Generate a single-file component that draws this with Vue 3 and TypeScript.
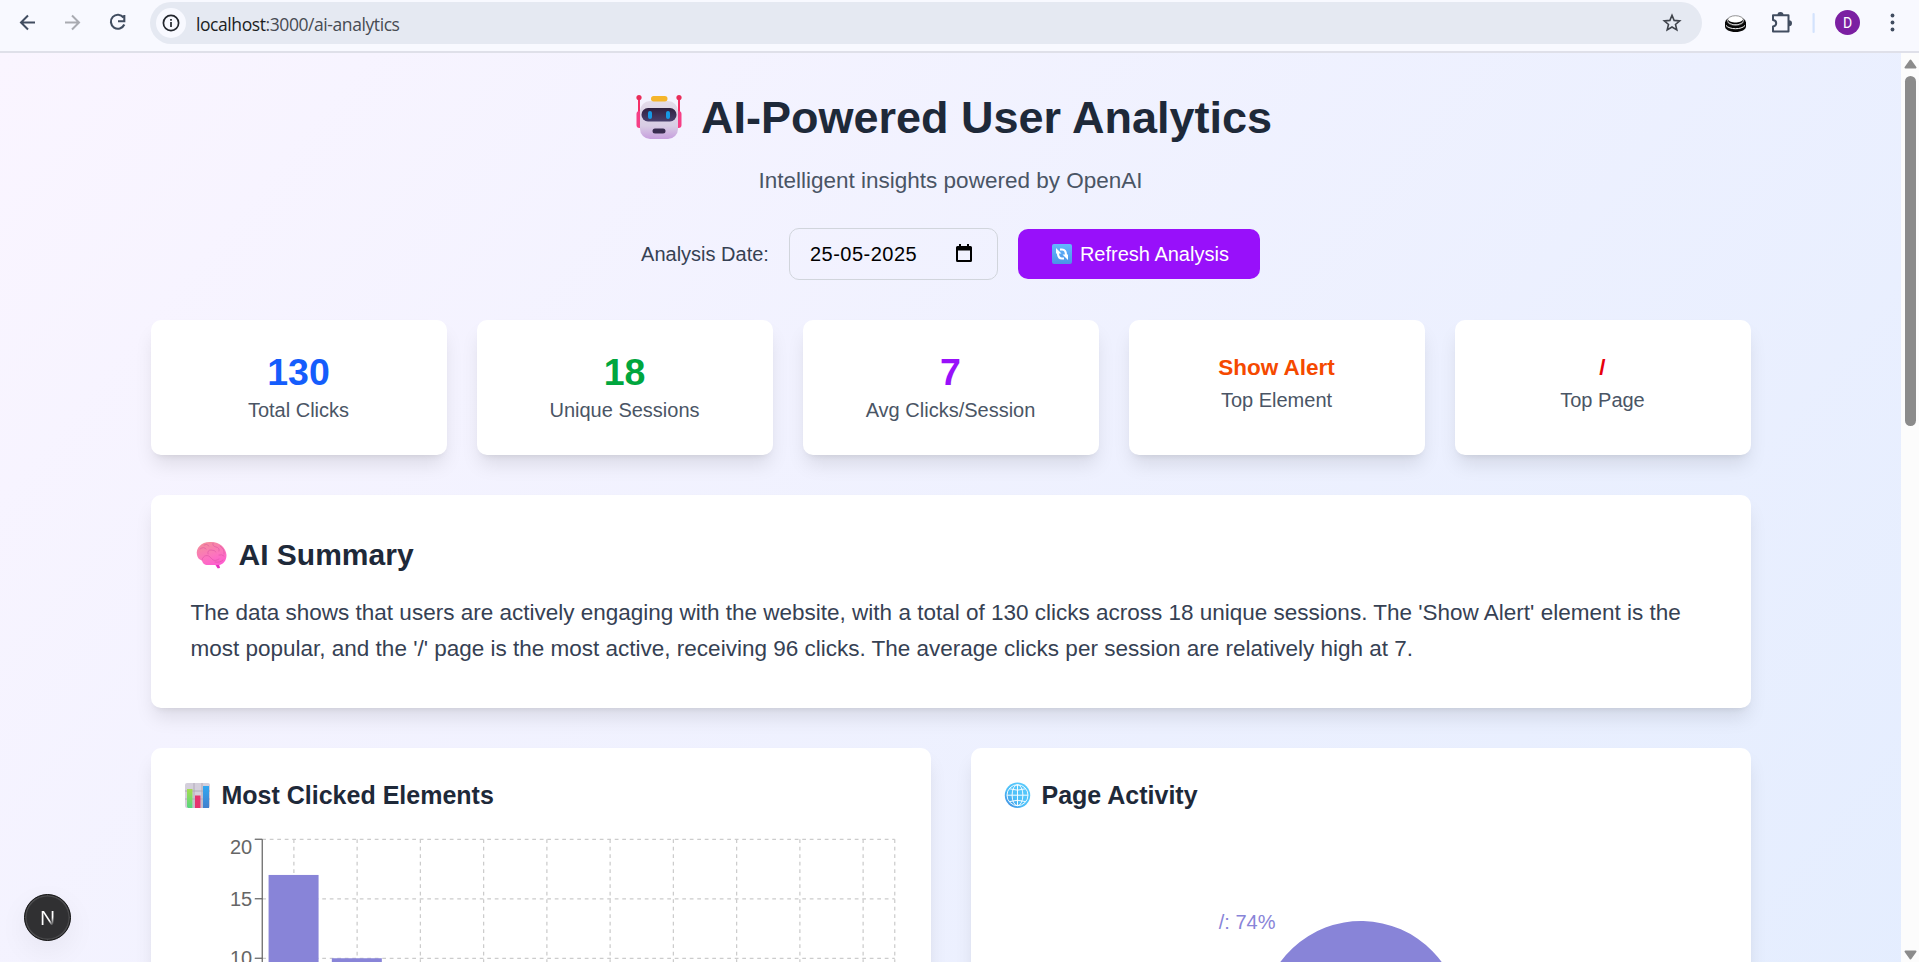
<script setup lang="ts">
interface Stat {
  value: string
  label: string
  tone: string
  small?: boolean
}

const stats: Stat[] = [
  { value: '130', label: 'Total Clicks', tone: 'blue' },
  { value: '18', label: 'Unique Sessions', tone: 'green' },
  { value: '7', label: 'Avg Clicks/Session', tone: 'purple' },
  { value: 'Show Alert', label: 'Top Element', tone: 'orange', small: true },
  { value: '/', label: 'Top Page', tone: 'red', small: true },
]

const plot = { left: 81.25, right: 713.75, top: 6.25, bottom: 244.25 }
const maxValue = 20
const band = (plot.right - plot.left) / 10
const toY = (v: number): number => plot.top + ((maxValue - v) / maxValue) * (plot.bottom - plot.top)

const columns: number[] = Array.from({ length: 10 }, (_, i) => plot.left + band * (i + 0.5))
const ticks = [
  { value: 20, labelY: 21 },
  { value: 15, labelY: 73 },
  { value: 10, labelY: 131.5 },
]
const bars = [17, 10].map((value, i) => ({
  x: plot.left + band * i + band * 0.1,
  y: toY(value),
  height: plot.bottom - toY(value),
}))
</script>

<template>
  <div class="window">
    <header class="toolbar">
      <svg class="nav" width="140" height="51" viewBox="0 0 140 51" fill="none" stroke-width="2">
        <path d="M35 22.5H21.5M28 15.5l-7 7 7 7" stroke="#414d60" />
        <path d="M65 22.5h13.5M72 15.5l7 7-7 7" stroke="#a9abb1" />
        <path d="M123.5 17.5A7 7 0 1 0 124.300 24.500M124.300 15v6.300h-6.300" stroke="#414d60" stroke-width="2.1" />
      </svg>
      <div class="address">
        <span class="info">
          <svg width="18" height="18" viewBox="0 0 18 18" fill="none" stroke="#22262d">
            <circle cx="9" cy="9" r="7.600" stroke-width="1.700" />
            <path d="M9 8v5M9 5v1.700" stroke-width="1.700" />
          </svg>
        </span>
        <span class="url"><b>localhost</b>:3000/ai-analytics</span>
        <svg class="star" width="20" height="20" viewBox="0 0 20 20" fill="none" stroke="#3f434b" stroke-width="1.600">
          <path d="M10 2.300l2.100 5.100 5.600.5-4.200 3.600 1.300 5.400L10 14l-4.800 2.900 1.300-5.400-4.200-3.600 5.600-.5z" />
        </svg>
      </div>
      <svg class="extensions" width="217" height="51" viewBox="1702 0 217 51">
        <path d="M1725 22v4.500c0 3 4.500 5.500 10.500 5.500s10.500-2.500 10.500-5.500V22z" fill="#080808" />
        <ellipse cx="1735.500" cy="22" rx="10.300" ry="5.300" fill="#080808" />
        <path d="M1726 25.500c3.500 4.300 15.500 4.300 19 0" fill="none" stroke="#fff" stroke-width="1" />
        <ellipse cx="1735.500" cy="20.600" rx="8.300" ry="4.900" fill="#fff" stroke="#666" stroke-width=".7" />
        <path d="M1728 19.500v1c0 2 3 3.800 7.500 3.800s7.500-1.800 7.500-3.800v-1c-1.500 4-13.500 4-15 0z" fill="#080808" />
        <path d="M1773 15.200h15.500v16.300h-15.500v-5q3.200-.5 3.200-3.200t-3.200-3.200z" fill="none" stroke="#414d60" stroke-width="2" stroke-linejoin="round" />
        <path d="M1777.500 15a3 3 0 0 1 6 0zM1789 20.300a3 3 0 0 1 0 6z" fill="#414d60" />
        <rect x="1812.500" y="13" width="2.200" height="20" rx="1" fill="#d3e3fd" />
        <circle cx="1847.500" cy="22.500" r="12.500" fill="#7b1fa2" />
        <text x="1847.500" y="27.500" text-anchor="middle" class="avatar">D</text>
        <g fill="#414d60">
          <circle cx="1892.500" cy="15.500" r="1.900" />
          <circle cx="1892.500" cy="22.500" r="1.900" />
          <circle cx="1892.500" cy="29.500" r="1.900" />
        </g>
      </svg>
    </header>

    <div class="viewport">
      <main class="page">
        <div class="container">
          <h1>
            <svg width="58" height="50" viewBox="0 0 58 50">
              <defs>
                <linearGradient id="head" x2="0" y2="1">
                  <stop offset="0" stop-color="#e3dcea" />
                  <stop offset=".65" stop-color="#d8cde4" />
                  <stop offset="1" stop-color="#c79fde" />
                </linearGradient>
                <linearGradient id="visor" x2="0" y2="1">
                  <stop offset="0" stop-color="#30203f" />
                  <stop offset="1" stop-color="#49406d" />
                </linearGradient>
              </defs>
              <path d="M8 6v27M48 6v27" stroke="#f52f67" stroke-width="2" />
              <circle cx="8" cy="4.500" r="2.600" fill="#e92d59" />
              <circle cx="48" cy="4.500" r="2.600" fill="#e92d59" />
              <rect x="5.500" y="18" width="6" height="17" rx="3" fill="#f63f86" />
              <rect x="44.500" y="18" width="6" height="17" rx="3" fill="#f63f86" />
              <rect x="9" y="8" width="38" height="38" rx="10" fill="url(#head)" />
              <rect x="20" y="3" width="16.500" height="5.500" rx="2.700" fill="#f5b52b" />
              <rect x="10.500" y="15" width="35" height="13.500" rx="6.500" fill="url(#visor)" />
              <rect x="17" y="18" width="4" height="8" rx="2" fill="#1699e5" />
              <rect x="35" y="18" width="4" height="8" rx="2" fill="#1699e5" />
              <rect x="21.500" y="35.500" width="13" height="5" rx="2.500" fill="#392c50" />
            </svg>
            <span class="title">AI-Powered User Analytics</span>
          </h1>
          <p class="subtitle">Intelligent insights powered by OpenAI</p>

          <div class="controls">
            <span class="date-label">Analysis Date:</span>
            <div class="date-input">
              <span>25-05-2025</span>
              <svg width="18" height="20" viewBox="0 0 18 20">
                <path fill="#000" fill-rule="evenodd" d="M4 0h2v2h6V0h2v2h1.500q1.500 0 1.500 1.500v13q0 1.500-1.500 1.500h-13Q1 18 1 16.500v-13Q1 2 2.500 2H4zM3 6.500V16h12V6.500z" />
              </svg>
            </div>
            <button class="refresh" type="button">
              <svg width="32" height="22" viewBox="0 0 32 22">
                <defs>
                  <linearGradient id="sync" x2="0" y2="1">
                    <stop offset="0" stop-color="#64b7ff" />
                    <stop offset="1" stop-color="#4b93e6" />
                  </linearGradient>
                </defs>
                <rect x="4" y="1" width="20" height="20" rx="2" fill="url(#sync)" />
                <g fill="none" stroke="#fff" stroke-width="2.200">
                  <path d="M12 6.500h2q4 0 4 5.500M16 15.500h-2q-4 0-4-5.500" />
                </g>
                <path d="M8 5v5.500h5.500zM20 17v-5.500h-5.500z" fill="#fff" />
              </svg>
              <span>Refresh Analysis</span>
            </button>
          </div>

          <section class="stats">
            <div v-for="stat in stats" :key="stat.label" class="card stat">
              <div class="value" :class="[stat.tone, { small: stat.small }]">{{ stat.value }}</div>
              <div class="label">{{ stat.label }}</div>
            </div>
          </section>

          <section class="card summary">
            <h2>
              <svg width="48" height="40" viewBox="0 0 48 40">
                <defs>
                  <linearGradient id="brain" x1=".3" x2=".7" y2="1">
                    <stop offset="0" stop-color="#f38e9c" />
                    <stop offset=".5" stop-color="#fc75bd" />
                    <stop offset="1" stop-color="#ff56d5" />
                  </linearGradient>
                </defs>
                <path d="M6 20C4.500 13 10.500 7 18.500 7c9-1 16.500 5 17 13 0 6-3.500 9.500-7.500 10l.8 3-2.200.3-2.300-3.300H17c-4 0-5.500-2-6-4.500-2.500-.5-4.500-2.500-5-5.500z" fill="url(#brain)" />
                <g fill="none" stroke="#dc53a3" stroke-width="1" opacity=".6" stroke-linecap="round">
                  <path d="M9 14q4-3 6 0M13 10q3-2 5 1M11 25c1-5 6-6 9-2s6 2 8 1M17 19q-1-4 3-4t5 2M22 8q-1 3 3 4t3 4M29 11q5 3 4 8M24 27q5 1 8-2M28 20q3-1 5 1" />
                </g>
                <path d="m25 30 1.700 3.300 2.200-.3-.8-3z" fill="#e52fbe" />
              </svg>
              <span>AI Summary</span>
            </h2>
            <p>
              The data shows that users are actively engaging with the website, with a total of 130 clicks across 18
              unique sessions. The 'Show Alert' element is the most popular, and the '/' page is the most active,
              receiving 96 clicks. The average clicks per session are relatively high at 7.
            </p>
          </section>

          <section class="charts">
            <div class="card panel">
              <h3>
                <svg width="41" height="35" viewBox="0 0 41 35">
                  <defs>
                    <linearGradient id="barGreen" x2="0" y2="1">
                      <stop offset="0" stop-color="#a5dc4e" />
                      <stop offset="1" stop-color="#57d681" />
                    </linearGradient>
                    <linearGradient id="barBlue" x2="0" y2="1">
                      <stop offset="0" stop-color="#2fa8f2" />
                      <stop offset="1" stop-color="#437fcc" />
                    </linearGradient>
                  </defs>
                  <rect x="4" y="5" width="25" height="25" rx="2" fill="#d4cfdb" />
                  <path d="M4 13h25M4 21h25M13 5v25M21 5v25" stroke="#aaa3b2" stroke-width=".8" />
                  <path d="M6 11h5.500v19H7q-1.500-1-1-3z" fill="url(#barGreen)" />
                  <rect x="14" y="17.500" width="5.500" height="12.500" fill="#e5346f" />
                  <rect x="22" y="8" width="6" height="22" fill="url(#barBlue)" />
                </svg>
                <span>Most Clicked Elements</span>
              </h3>
              <svg class="chart" width="720" height="375" viewBox="0 0 720 375">
                <g stroke="#ccc" stroke-width="1.250" stroke-dasharray="3.750 3.750">
                  <line v-for="t in ticks" :key="t.value" :x1="plot.left" :x2="plot.right" :y1="toY(t.value)" :y2="toY(t.value)" />
                  <line v-for="x in columns" :key="x" :x1="x" :x2="x" :y1="plot.top" :y2="plot.bottom" />
                  <line :x1="plot.right" :x2="plot.right" :y1="plot.top" :y2="plot.bottom" />
                </g>
                <g stroke="#666" stroke-width="1.250">
                  <line :x1="plot.left" :x2="plot.left" :y1="plot.top" :y2="plot.bottom" />
                  <line v-for="t in ticks" :key="t.value" :x1="plot.left - 7.5" :x2="plot.left" :y1="toY(t.value)" :y2="toY(t.value)" />
                </g>
                <text v-for="t in ticks" :key="t.value" class="tick" x="71.250" :y="t.labelY">{{ t.value }}</text>
                <rect v-for="b in bars" :key="b.x" :x="b.x" :y="b.y" width="50" :height="b.height" fill="#8884d8" />
              </svg>
            </div>

            <div class="card panel">
              <h3>
                <svg width="41" height="35" viewBox="0 0 41 35">
                  <defs>
                    <linearGradient id="globe" x1="1" x2="0" y2="1">
                      <stop offset="0" stop-color="#5bcdfd" />
                      <stop offset=".6" stop-color="#4dbff8" />
                      <stop offset="1" stop-color="#3d82dc" />
                    </linearGradient>
                  </defs>
                  <circle cx="16.500" cy="17.200" r="12.700" fill="url(#globe)" />
                  <g fill="none" stroke="#f4fcff" stroke-width="1">
                    <ellipse cx="16.500" cy="17.200" rx="5.400" ry="10.500" />
                    <circle cx="16.500" cy="17.200" r="10.500" />
                    <path d="M16.500 6.700v21M6 17.200h21M8.500 10.800q8 2.700 16 0M8.500 23.600q8-2.700 16 0" />
                  </g>
                </svg>
                <span>Page Activity</span>
              </h3>
              <svg class="chart" width="720" height="375" viewBox="0 0 720 375">
                <path d="M460 188A100 100 0 1 0 353 287.800L360 188z" fill="#8884d8" />
                <text class="slice-label" x="274.500" y="95.500">/: 74%</text>
              </svg>
            </div>
          </section>
        </div>
      </main>
      <div class="scrollbar">
        <svg width="18" height="18" viewBox="0 0 18 18"><path d="M9.500 7.500l5 7h-10z" fill="#8b8b8b" stroke="#8b8b8b" stroke-width="2" stroke-linejoin="round" /></svg>
        <div class="thumb"></div>
        <svg class="down" width="18" height="18" viewBox="0 0 18 18"><path d="M9.500 14.500l-5-7h10z" fill="#8b8b8b" stroke="#8b8b8b" stroke-width="2" stroke-linejoin="round" /></svg>
      </div>
      <div class="dev-badge"><span>N</span></div>
    </div>
  </div>
</template>

<style>
body {
  overflow: hidden;
}
</style>

<style scoped>
.window {
  width: 1919px;
  height: 962px;
  overflow: hidden;
  display: flex;
  flex-direction: column;
  font-family: 'Liberation Sans', Arial, sans-serif;
  font-size: 20px;
  line-height: 30px;
}
.window * {
  box-sizing: border-box;
}
svg {
  display: block;
  flex: none;
}
h1, h2, h3, p {
  margin: 0;
}
.toolbar {
  flex: none;
  display: flex;
  height: 53px;
  background: #f8f9ff;
  border-bottom: 2px solid #dfe0e9;
}
.address {
  display: flex;
  align-items: center;
  width: 1552px;
  height: 42px;
  margin: 2px 0 0 10px;
  padding: 0 20px 0 6px;
  border-radius: 21px;
  background: #e5e9f2;
}
.info {
  display: flex;
  align-items: center;
  justify-content: center;
  width: 30px;
  height: 30px;
  border-radius: 50%;
  background: #f8f9ff;
}
.url {
  margin: 1px 0 0 10px;
  font-family: 'Open Sans', 'Noto Sans', sans-serif;
  font-size: 17.5px;
  letter-spacing: -0.42px;
  color: #474b52;
}
.url b {
  font-weight: 400;
  color: #1b1d22;
}
.star {
  margin-left: auto;
}
.avatar {
  font-family: Roboto, sans-serif;
  font-size: 14px;
  fill: #fff;
}
.viewport {
  position: relative;
  flex: 1;
  display: flex;
  align-items: stretch;
  min-height: 0;
  overflow: hidden;
}
.page {
  width: 1901px;
  height: 2300px;
  padding: 40px 0;
  background: linear-gradient(to bottom right, #faf5ff, #dbeafe);
}
.container {
  width: 1600px;
  margin: 0 auto;
}
h1 {
  display: flex;
  justify-content: center;
  height: 50px;
  padding-left: 2px;
  font-size: 45px;
  line-height: 50px;
  color: #1e2939;
}
.title {
  margin-left: 12px;
}
.subtitle {
  margin-top: 20px;
  text-align: center;
  font-size: 22.5px;
  line-height: 35px;
  color: #4a5565;
}
.controls {
  display: flex;
  align-items: center;
  justify-content: center;
  gap: 20px;
  margin-top: 30px;
}
.date-label {
  color: #364153;
}
.date-input {
  display: flex;
  align-items: center;
  justify-content: space-between;
  width: 209px;
  height: 52px;
  padding: 0 24px 0 20px;
  border: 1px solid #d1d5dc;
  border-radius: 10px;
  color: #000;
  letter-spacing: 0.5px;
}
.refresh {
  display: flex;
  align-items: center;
  width: 242px;
  height: 50px;
  padding: 0 0 0 30px;
  border: 0;
  border-radius: 10px;
  background: #9810fa;
  color: #fff;
  font: inherit;
}
.card {
  border-radius: 10px;
  background: #fff;
  box-shadow: 0 12.5px 18.75px -3.75px rgba(0, 0, 0, 0.1), 0 5px 7.5px -5px rgba(0, 0, 0, 0.1);
}
.stats {
  display: grid;
  grid-template-columns: repeat(5, 1fr);
  gap: 30px;
  margin-top: 40px;
}
.stat {
  height: 135px;
  padding: 30px;
  text-align: center;
}
.value {
  font-size: 37.5px;
  line-height: 45px;
  font-weight: 700;
}
.value.small {
  font-size: 22.5px;
  line-height: 35px;
}
.label {
  color: #4a5565;
}
.blue { color: #155dfc; }
.green { color: #00a63e; }
.purple { color: #9810fa; }
.orange { color: #f54900; }
.red { color: #e7000b; }
.summary {
  height: 213px;
  margin-top: 40px;
  padding: 40px;
}
h2 {
  display: flex;
  font-size: 30px;
  line-height: 40px;
  color: #1e2939;
}
.summary p {
  margin-top: 19.5px;
  font-size: 22.5px;
  line-height: 36.56px;
  color: #364153;
}
.charts {
  display: grid;
  grid-template-columns: 1fr 1fr;
  gap: 40px;
  margin-top: 40px;
}
.panel {
  padding: 30px;
}
h3 {
  display: flex;
  font-size: 25px;
  line-height: 35px;
  color: #1e2939;
}
.chart {
  margin-top: 20px;
}
.tick {
  fill: #666;
  text-anchor: end;
}
.slice-label {
  fill: #8884d8;
  text-anchor: end;
}
.scrollbar {
  display: flex;
  flex-direction: column;
  width: 18px;
  height: 909px;
  background: #fcfcfc;
}
.thumb {
  width: 11px;
  height: 350px;
  margin: 5px 0 0 4px;
  border-radius: 6px;
  background: #8b8b8b;
}
.down {
  margin-top: auto;
}
.dev-badge {
  position: absolute;
  left: 24px;
  bottom: 21px;
  display: flex;
  align-items: center;
  justify-content: center;
  width: 47px;
  height: 47px;
  border: 1px solid #111;
  border-radius: 50%;
  background: #303032;
  box-shadow: inset 0 0 0 1.5px #4a4a4c, 0 10px 30px rgba(0, 0, 0, 0.06);
}
.dev-badge span {
  font-size: 21px;
  line-height: 24px;
  background: linear-gradient(135deg, #fff 62%, #303032 82%);
  -webkit-background-clip: text;
  background-clip: text;
  color: transparent;
}
</style>
